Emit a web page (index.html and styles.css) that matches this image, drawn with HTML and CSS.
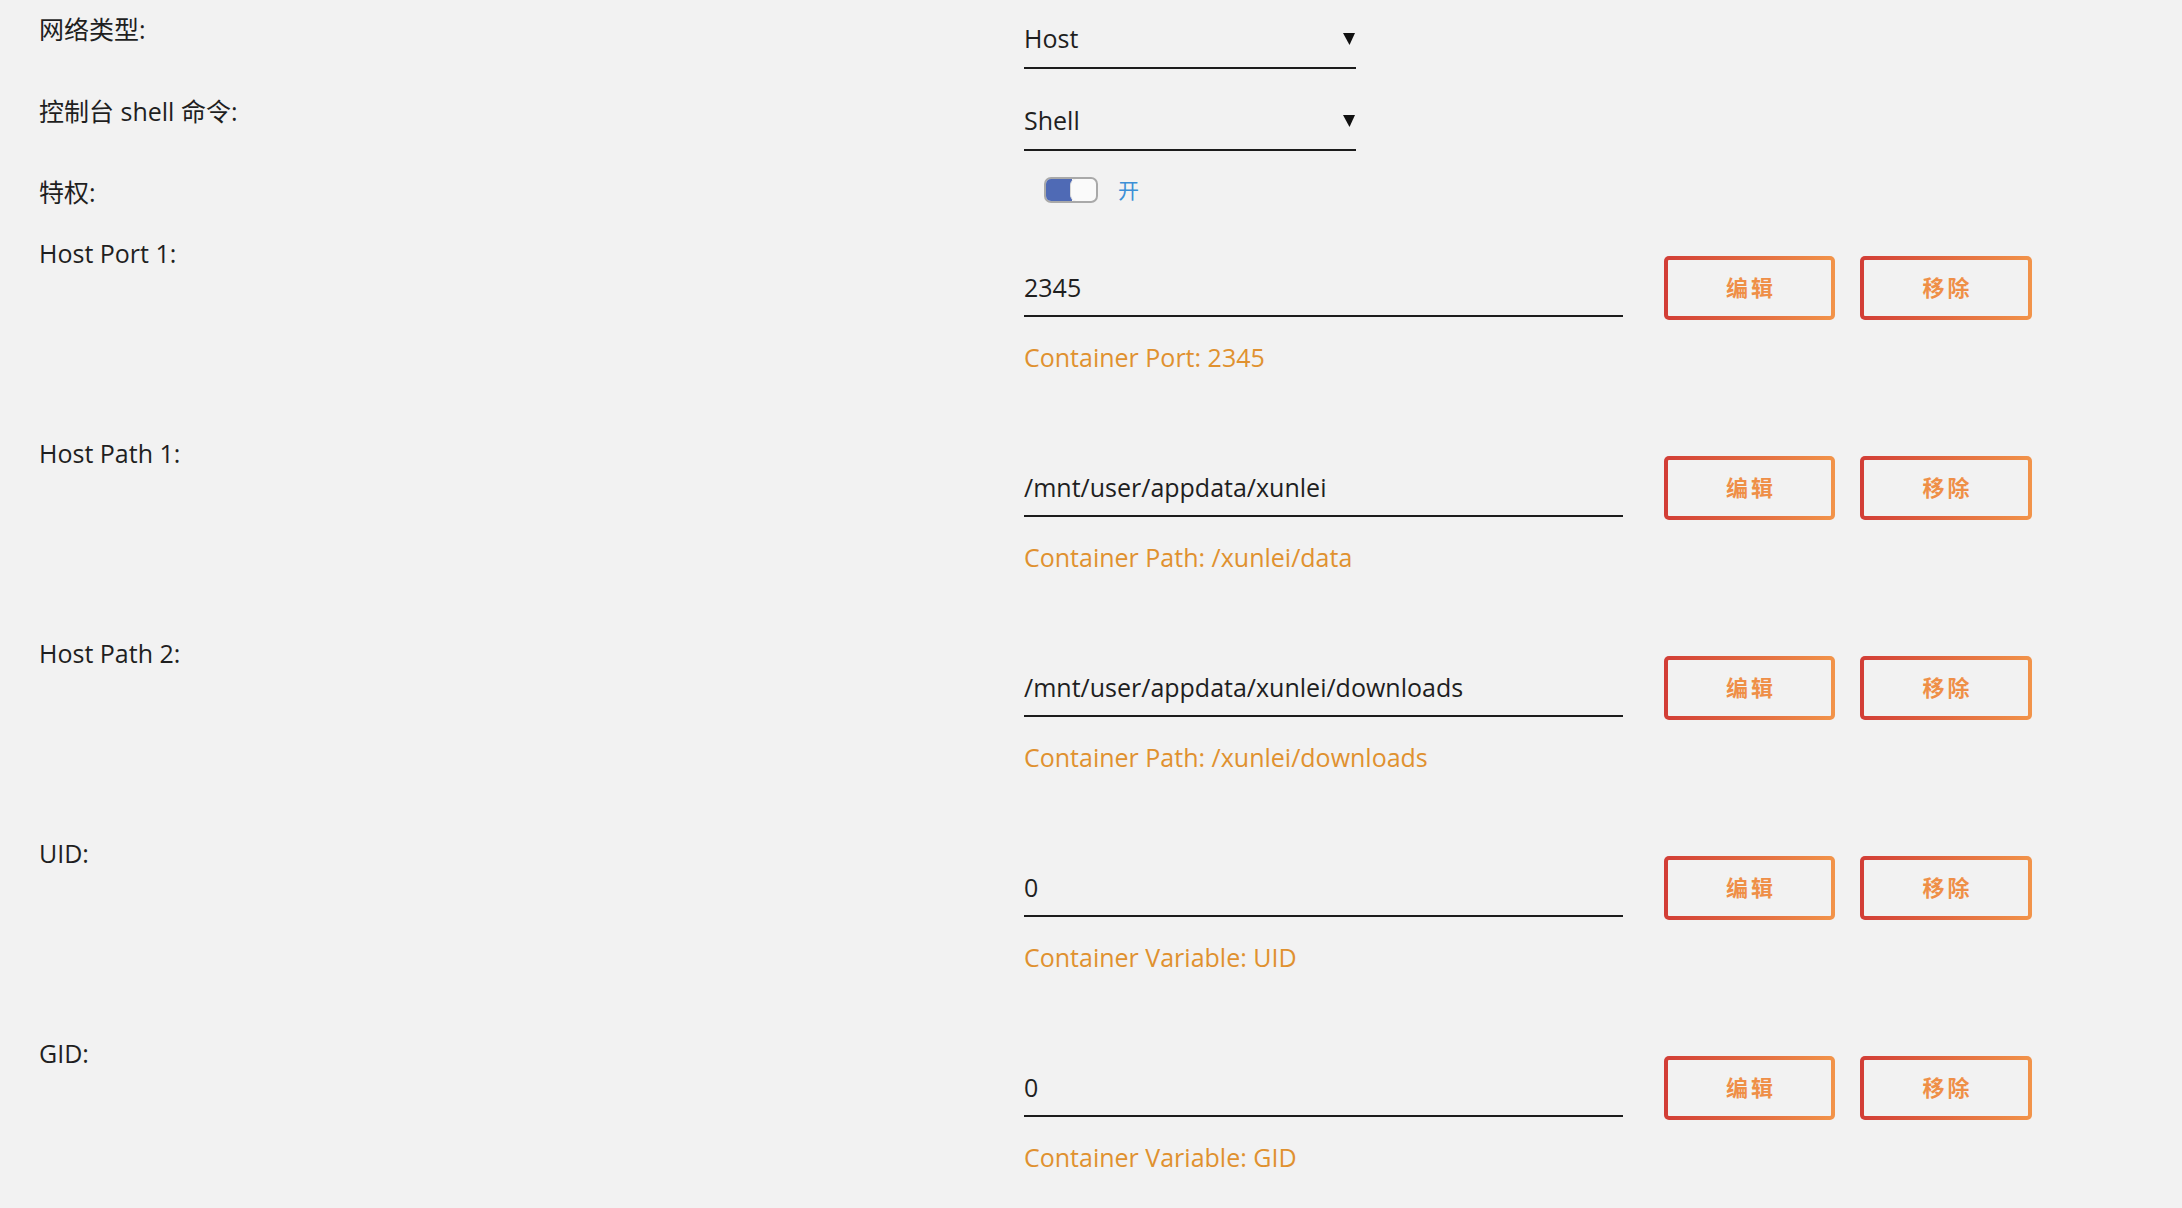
FILE: index.html
```html
<!DOCTYPE html>
<html lang="zh-CN">
<head>
<meta charset="utf-8">
<title>Docker 模板</title>
<link rel="stylesheet" href="styles.css">
</head>
<body>
<div class="form">
  <div class="row row-select">
    <div class="label label-top">网络类型:</div>
    <div class="select">
      <span>Host</span>
      <svg class="arrow" width="12" height="12" viewBox="0 0 12 12"><polygon points="0,0 12,0 6.5,12" fill="#111"/></svg>
    </div>
  </div>
  <div class="row row-select">
    <div class="label label-top">控制台 shell 命令:</div>
    <div class="select">
      <span>Shell</span>
      <svg class="arrow" width="12" height="12" viewBox="0 0 12 12"><polygon points="0,0 12,0 6.5,12" fill="#111"/></svg>
    </div>
  </div>
  <div class="row row-toggle">
    <div class="label label-top2">特权:</div>
    <div class="switch">
      <div class="toggle"><span class="toggle-fill"></span><span class="toggle-knob"></span></div>
      <span class="switch-text">开</span>
    </div>
  </div>

  <div class="row row-item">
    <div class="label">Host Port 1:</div>
    <div class="field">
      <div class="input-wrap">
        <div class="input">2345</div>
        <div class="desc">Container Port: 2345</div>
      </div>
      <div class="buttons">
        <button class="btn">编辑</button>
        <button class="btn btn-wide">移除</button>
      </div>
    </div>
  </div>

  <div class="row row-item">
    <div class="label">Host Path 1:</div>
    <div class="field">
      <div class="input-wrap">
        <div class="input">/mnt/user/appdata/xunlei</div>
        <div class="desc">Container Path: /xunlei/data</div>
      </div>
      <div class="buttons">
        <button class="btn">编辑</button>
        <button class="btn btn-wide">移除</button>
      </div>
    </div>
  </div>

  <div class="row row-item">
    <div class="label">Host Path 2:</div>
    <div class="field">
      <div class="input-wrap">
        <div class="input">/mnt/user/appdata/xunlei/downloads</div>
        <div class="desc">Container Path: /xunlei/downloads</div>
      </div>
      <div class="buttons">
        <button class="btn">编辑</button>
        <button class="btn btn-wide">移除</button>
      </div>
    </div>
  </div>

  <div class="row row-item">
    <div class="label">UID:</div>
    <div class="field">
      <div class="input-wrap">
        <div class="input">0</div>
        <div class="desc">Container Variable: UID</div>
      </div>
      <div class="buttons">
        <button class="btn">编辑</button>
        <button class="btn btn-wide">移除</button>
      </div>
    </div>
  </div>

  <div class="row row-item">
    <div class="label">GID:</div>
    <div class="field">
      <div class="input-wrap">
        <div class="input">0</div>
        <div class="desc">Container Variable: GID</div>
      </div>
      <div class="buttons">
        <button class="btn">编辑</button>
        <button class="btn btn-wide">移除</button>
      </div>
    </div>
  </div>
</div>
</body>
</html>
```

FILE: styles.css
```css
html, body {
  margin: 0;
  padding: 0;
  background: #f2f2f2;
}
body {
  font-family: "Open Sans", "Noto Sans CJK SC", sans-serif;
  font-size: 25px;
  color: #1f1f1f;
  overflow: hidden;
}
.form {
  padding-left: 39px;
}
.row {
  display: flex;
  align-items: flex-start;
}
.label {
  width: 985px;
  flex: none;
  line-height: 34px;
}
.label-top {
  padding-top: 12px;
}
.label-top2 {
  padding-top: 11px;
}
.row-select {
  margin-bottom: 13px;
}
.select {
  width: 332px;
  box-sizing: border-box;
  padding-top: 21px;
  padding-bottom: 12px;
  line-height: 34px;
  border-bottom: 2px solid #1c1c1c;
  display: flex;
  justify-content: space-between;
  align-items: flex-start;
}
.arrow {
  margin-top: 12px;
  margin-right: 1px;
  display: block;
}
.row-toggle {
  margin-bottom: 27px;
}
.switch {
  display: flex;
  align-items: center;
  margin-top: 13px;
  margin-left: 20px;
}
.toggle {
  width: 54px;
  height: 26px;
  box-sizing: border-box;
  border: 2px solid #a9a9a9;
  border-radius: 7px;
  overflow: hidden;
  display: flex;
  background: #fafafa;
}
.toggle-fill {
  width: 26px;
  background: #4f6ab5;
}
.toggle-knob {
  width: 24px;
  background: #fafafa;
  border-radius: 6px;
  margin-left: -2px;
  border-left: 1px solid #d8d8d8;
}
.switch-text {
  margin-left: 20px;
  font-size: 21px;
  line-height: 26px;
  color: #3b8fd6;
}
.row-item {
  margin-bottom: 62px;
}
.field {
  display: flex;
  align-items: flex-start;
}
.input-wrap {
  width: 599px;
}
.input {
  padding-top: 34px;
  padding-bottom: 11px;
  line-height: 34px;
  border-bottom: 2px solid #1c1c1c;
  white-space: nowrap;
}
.desc {
  margin-top: 23px;
  line-height: 34px;
  color: #e0912f;
  white-space: nowrap;
}
.buttons {
  display: flex;
  gap: 25px;
  margin-left: 41px;
  margin-top: 20px;
}
.btn {
  width: 171px;
  height: 64px;
  box-sizing: border-box;
  border: 4px solid transparent;
  border-radius: 5px;
  background: linear-gradient(#f2f2f2, #f2f2f2) padding-box,
              linear-gradient(to right, #d23d36, #f2944a) border-box;
  color: #ef8f47;
  font-family: "Noto Sans CJK SC", "Open Sans", sans-serif;
  font-size: 22px;
  font-weight: bold;
  letter-spacing: 3px;
  display: flex;
  align-items: center;
  justify-content: center;
  padding: 0 0 4px 3px;
  margin: 0;
  cursor: pointer;
}
.btn-wide {
  width: 172px;
}
```
